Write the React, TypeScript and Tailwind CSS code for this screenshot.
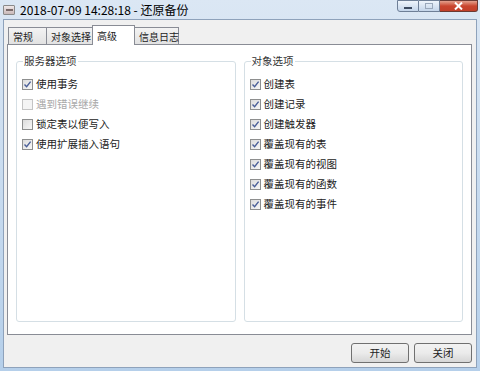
import React from 'react';

const font = { fontFamily: '"Noto Sans CJK SC", "Noto Sans", sans-serif' };

type Item = { label: string; checked: boolean; disabled?: boolean };

const serverItems: Item[] = [
  { label: '使用事务', checked: true },
  { label: '遇到错误继续', checked: false, disabled: true },
  { label: '锁定表以便写入', checked: false },
  { label: '使用扩展插入语句', checked: true },
];

const objectItems: Item[] = [
  { label: '创建表', checked: true },
  { label: '创建记录', checked: true },
  { label: '创建触发器', checked: true },
  { label: '覆盖现有的表', checked: true },
  { label: '覆盖现有的视图', checked: true },
  { label: '覆盖现有的函数', checked: true },
  { label: '覆盖现有的事件', checked: true },
];

const CheckBox: React.FC<{ checked: boolean; disabled?: boolean }> = ({ checked, disabled }) => (
  <div
    className={`w-[11px] h-[11px] border flex items-center justify-center shrink-0 ${
      disabled ? 'border-[#c4c4c4] bg-[#f4f4f4]' : 'border-[#8e8f8f] bg-gradient-to-br from-[#dcdcdc] to-[#f7f7f7]'
    }`}
  >
    {checked && (
      <svg width="9" height="9" viewBox="0 0 9 9">
        <path d="M1.5 4.6 L3.6 6.8 L7.6 1.6" fill="none" stroke="#4a5f98" strokeWidth="1.4" />
      </svg>
    )}
  </div>
);

const GroupBox: React.FC<{ title: string; items: Item[] }> = ({ title, items }) => (
  <div className="flex-1 relative border border-[#d5dfe5] rounded-[3px] pt-[12px] pl-[5px]">
    <span className="absolute -top-[8px] left-[6px] bg-white px-[1px] text-[10.5px] leading-[14px] text-[#333333]">
      {title}
    </span>
    {items.map((it) => (
      <div key={it.label} className="h-[20px] flex items-center gap-[3px]">
        <CheckBox checked={it.checked} disabled={it.disabled} />
        <span className={`text-[10.5px] leading-none ${it.disabled ? 'text-[#a8a8a8]' : 'text-[#222222]'}`}>
          {it.label}
        </span>
      </div>
    ))}
  </div>
);

const Tab: React.FC<{ label: string; width: string; active?: boolean }> = ({ label, width, active }) =>
  active ? (
    <div
      className={`${width} h-[20px] -mb-px -ml-px relative z-10 bg-white border border-b-0 border-[#898c95] flex items-start pt-[2px] pl-[4px] whitespace-nowrap text-[10px] text-[#222222]`}
    >
      {label}
    </div>
  ) : (
    <div
      className={`${width} h-[17px] -ml-px border border-b-0 border-[#898c95] bg-gradient-to-b from-[#f3f3f3] to-[#e2e2e2] flex items-center pl-[4px] whitespace-nowrap text-[10px] text-[#222222]`}
    >
      {label}
    </div>
  );

const Button: React.FC<{ label: string }> = ({ label }) => (
  <div className="w-[58px] h-[20px] rounded-[3px] border border-[#707070] bg-gradient-to-b from-[#f2f2f2] via-[#ebebeb] to-[#d6d6d6] flex items-center justify-center text-[10.5px] text-[#222222]">
    {label}
  </div>
);

export default function App() {
  return (
    <div
      className="w-[480px] h-[371px] overflow-hidden relative flex flex-col px-[3px] pb-[3px] bg-gradient-to-b from-[#dbe7f4] via-[#c8dbef] to-[#b5cfea]"
      style={font}
    >
      {/* Title bar */}
      <div className="h-[19px] flex items-center relative shrink-0">
        <div className="w-[12px] h-[10px] rounded-[1px] border border-[#8a8a8a] bg-gradient-to-b from-[#f0e8e8] to-[#c9b9b9] flex items-center justify-center">
          <div className="w-[7px] h-[2px] bg-[#7a6a6a]" />
        </div>
        <span className="ml-[5px] text-[12px] text-black leading-none">2018-07-09 14:28:18 - 还原备份</span>
        <div className="absolute right-[-1px] top-0 flex h-[12px]">
          <div className="w-[22px] h-full border border-[#6e7f97] rounded-bl-[3px] bg-gradient-to-b from-[#eef4fb] to-[#c4d5ea] flex items-center justify-center">
            <div className="w-[8px] h-[2px] bg-[#3c4a60] mt-[3px]" />
          </div>
          <div className="w-[21px] h-full border border-l-0 border-[#6e7f97] bg-gradient-to-b from-[#eef4fb] to-[#c4d5ea] flex items-center justify-center">
            <div className="w-[8px] h-[6px] border border-[#9aa8bb]" />
          </div>
          <div className="w-[38px] h-full border border-l-0 border-[#6b3a33] rounded-br-[3px] bg-gradient-to-b from-[#e3a08d] via-[#c9452e] to-[#c2402a] flex items-center justify-center">
            <svg width="9" height="8" viewBox="0 0 9 8">
              <path d="M1 0.5 L8 7.5 M8 0.5 L1 7.5" stroke="#ffffff" strokeWidth="2" />
            </svg>
          </div>
        </div>
      </div>

      {/* Client area */}
      <div className="flex-1 bg-[#f0f0f0] border border-[#8ea2bb] flex flex-col pl-[3px] pr-[4px] pt-[5px]">
        <div className="flex items-end pl-[2px]">
          <Tab label="常规" width="w-[39px]" />
          <Tab label="对象选择" width="w-[47px]" />
          <Tab label="高级" width="w-[43px]" active />
          <Tab label="信息日志" width="w-[45px]" />
        </div>

        <div className="h-[291px] bg-white border border-[#898c95] flex gap-[8px] px-[8px] pt-[16px] pb-[12px]">
          <GroupBox title="服务器选项" items={serverItems} />
          <GroupBox title="对象选项" items={objectItems} />
        </div>

        <div className="flex justify-end gap-[5px] mt-[8px]">
          <Button label="开始" />
          <Button label="关闭" />
        </div>
      </div>
    </div>
  );
}
